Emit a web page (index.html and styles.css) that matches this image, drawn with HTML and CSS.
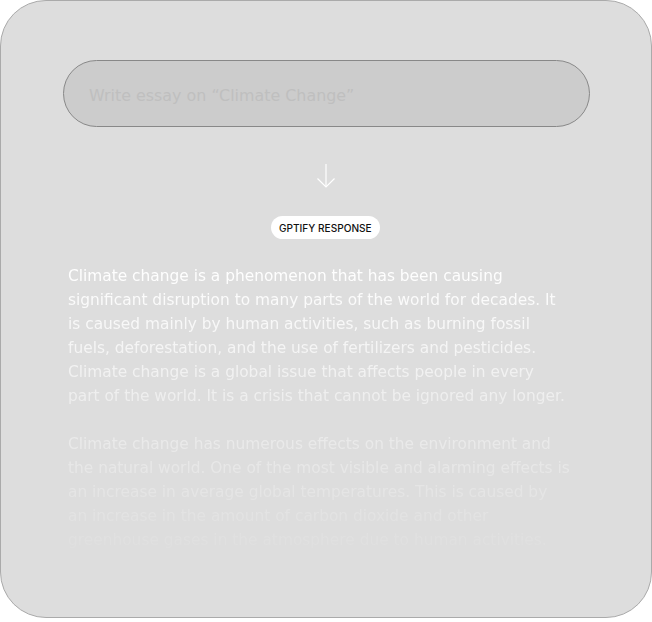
FILE: index.html
```html
<!DOCTYPE html>
<html lang="en">
<head>
<meta charset="utf-8">
<title>GPTify</title>
<link rel="stylesheet" href="styles.css">
</head>
<body>
<main class="card">
  <div class="prompt">
    <span class="prompt-text">Write essay on “Climate Change”</span>
  </div>
  <div class="arrow">
    <svg width="22" height="26" viewBox="0 0 22 26" fill="none" stroke="#ffffff" stroke-width="1.2">
      <path d="M11 1 V24"/>
      <path d="M2.5 15.5 L11 24 L19.5 15.5"/>
    </svg>
  </div>
  <div class="badge">GPTIFY RESPONSE</div>
  <section class="response">
    <p>Climate change is a phenomenon that has been causing<br>significant disruption to many parts of the world for decades. It<br>is caused mainly by human activities, such as burning fossil<br>fuels, deforestation, and the use of fertilizers and pesticides.<br>Climate change is a global issue that affects people in every<br>part of the world. It is a crisis that cannot be ignored any longer.</p>
    <p>Climate change has numerous effects on the environment and<br>the natural world. One of the most visible and alarming effects is<br>an increase in average global temperatures. This is caused by<br>an increase in the amount of carbon dioxide and other<br>greenhouse gases in the atmosphere due to human activities.</p>
  </section>
</main>
</body>
</html>
```

FILE: styles.css
```css
html, body {
  margin: 0;
  padding: 0;
  background: #ffffff;
}
.card {
  box-sizing: border-box;
  width: 652px;
  height: 618px;
  background: #dddddd;
  border: 1px solid #aaaaaa;
  border-radius: 46px;
  padding: 59px 0 0 62px;
  overflow: hidden;
  display: flex;
  flex-direction: column;
}
.prompt {
  box-sizing: border-box;
  width: 527px;
  height: 67px;
  border: 1px solid #888888;
  border-radius: 34px;
  background: #cccccc;
  padding: 0 0 0 25px;
  display: flex;
  align-items: center;
}
.prompt-text {
  font-family: "DejaVu Sans", sans-serif;
  font-size: 15.9px;
  color: #bfbfbf;
  padding-top: 4px;
}
.arrow {
  width: 527px;
  display: flex;
  justify-content: center;
  margin-top: 36px;
  height: 26px;
}
.arrow svg { margin-left: -1px; }
.badge {
  align-self: flex-start;
  margin: 27px 0 0 208px;
  background: #ffffff;
  border-radius: 12px;
  height: 23px;
  padding: 0 8px;
  display: flex;
  align-items: center;
  font-family: Inter, "Liberation Sans", sans-serif;
  font-size: 10.1px;
  font-weight: 500;
  color: #111111;
}
.response {
  margin: 25px 0 0 5px;
  font-family: "DejaVu Sans", sans-serif;
  font-size: 15.4px;
  line-height: 24px;
  color: #ffffff;
  white-space: nowrap;
  -webkit-mask-image: linear-gradient(to bottom, #000 0px, rgba(0,0,0,0.5) 135px, rgba(0,0,0,0.06) 290px, rgba(0,0,0,0) 305px);
  mask-image: linear-gradient(to bottom, #000 0px, rgba(0,0,0,0.5) 135px, rgba(0,0,0,0.06) 290px, rgba(0,0,0,0) 305px);
}
.response p {
  margin: 0 0 24px 0;
}
```
